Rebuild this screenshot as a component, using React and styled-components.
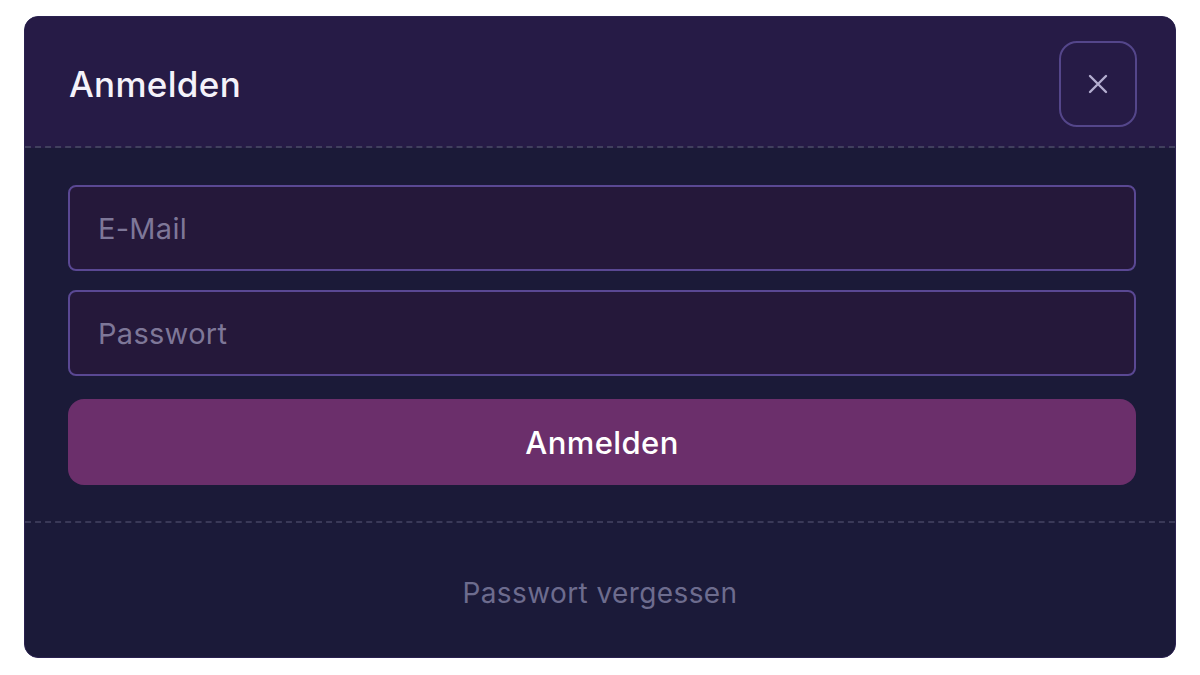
import React from "react";
import styled, { createGlobalStyle } from "styled-components";

const Global = createGlobalStyle`
  html, body { margin: 0; padding: 0; background: #ffffff; }
  body { font-family: "Inter", "Noto Sans", sans-serif; }
  * { box-sizing: border-box; }
`;

const Page = styled.div`
  width: 1200px;
  height: 675px;
  padding: 16px 24px 17px 24px;
`;

const Modal = styled.div`
  width: 100%;
  height: 100%;
  border-radius: 14px;
  overflow: hidden;
  background: #1b1a39;
  border: 1px solid #2a2150;
  display: flex;
  flex-direction: column;
`;

const Header = styled.div`
  height: 131px;
  background: #261b46;
  border-bottom: 2px dashed #41405e;
  display: flex;
  align-items: center;
  justify-content: space-between;
  padding: 5px 38px 0 44px;
`;

const Title = styled.h2`
  margin: 0;
  font-size: 35px;
  font-weight: 500;
  color: #f4f2fa;
  letter-spacing: 0.3px;
`;

const CloseButton = styled.button`
  width: 78px;
  height: 86px;
  border-radius: 18px;
  border: 2px solid #54468a;
  background: transparent;
  color: #b4aed0;
  display: flex;
  align-items: center;
  justify-content: center;
  padding: 0;
`;

const Body = styled.div`
  padding: 37px 39px 36px 43px;
  display: flex;
  flex-direction: column;
  border-bottom: 2px dashed #3a3958;
  background: #1b1a38;
`;

const Field = styled.div`
  height: 86px;
  border-radius: 8px;
  border: 2px solid #5a4893;
  background: #25183a;
  display: flex;
  align-items: center;
  padding: 0 28px;
  margin-bottom: ${(p) => p.$gap}px;
`;

const Placeholder = styled.span`
  font-size: 29px;
  color: #7e7798;
  font-weight: 400;
  letter-spacing: 0.3px;
`;

const SubmitButton = styled.button`
  height: 86px;
  border-radius: 16px;
  border: none;
  background: #6b2f6b;
  color: #ffffff;
  font-family: inherit;
  font-size: 31px;
  font-weight: 500;
  letter-spacing: 0.4px;
`;

const Footer = styled.div`
  flex: 1;
  display: flex;
  align-items: center;
  justify-content: center;
  padding-top: 6px;
`;

const Link = styled.span`
  font-size: 28px;
  color: #6d6c8e;
  font-weight: 400;
  letter-spacing: 0.4px;
`;

export default function App() {
  return (
    <>
      <Global />
      <Page>
        <Modal>
          <Header>
            <Title>Anmelden</Title>
            <CloseButton aria-label="Schließen">
              <svg width="22" height="22" viewBox="0 0 22 22" fill="none">
                <path d="M3 3L19 19M19 3L3 19" stroke="currentColor" strokeWidth="2.4" strokeLinecap="round" />
              </svg>
            </CloseButton>
          </Header>
          <Body>
            <Field $gap={19}><Placeholder>E-Mail</Placeholder></Field>
            <Field $gap={23}><Placeholder>Passwort</Placeholder></Field>
            <SubmitButton>Anmelden</SubmitButton>
          </Body>
          <Footer>
            <Link>Passwort vergessen</Link>
          </Footer>
        </Modal>
      </Page>
    </>
  );
}
